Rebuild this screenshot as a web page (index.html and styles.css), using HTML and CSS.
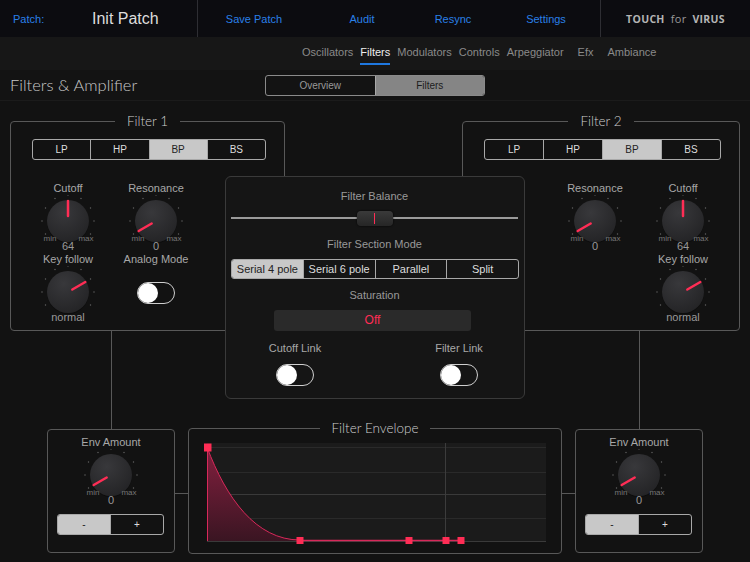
FILE: index.html
```html
<!DOCTYPE html>
<html lang="en">
<head>
    <meta charset="UTF-8">
    <title>Touch for Virus - Filters</title>
    <link rel="stylesheet" href="styles.css">
</head>
<body>
    <!-- TOP BAR -->
    <header class="topbar">
        <div class="patch">
            <span class="patch-label">Patch:</span>
            <span class="patch-name">Init Patch</span>
        </div>
        <nav class="actions">
            <a href="#">Save Patch</a>
            <a href="#">Audit</a>
            <a href="#">Resync</a>
            <a href="#">Settings</a>
        </nav>
        <div class="brand"><b>TOUCH</b> <span>for</span> <b>VIRUS</b></div>
    </header>

    <nav class="tabs">
        <a href="#">Oscillators</a>
        <a href="#" class="active">Filters</a>
        <a href="#">Modulators</a>
        <a href="#">Controls</a>
        <a href="#">Arpeggiator</a>
        <a href="#" class="wide">Efx</a>
        <a href="#" class="wide">Ambiance</a>
    </nav>

    <div class="titlebar">
        <h1>Filters &amp; Amplifier</h1>
        <div class="seg view-seg">
            <span>Overview</span>
            <span class="on">Filters</span>
        </div>
    </div>

    <main class="main">
        <div class="filters">
            <!-- FILTER 1 -->
            <fieldset class="panel filter">
                <legend>Filter 1</legend>
                <div class="seg type-seg">
                    <span>LP</span><span>HP</span><span class="on">BP</span><span>BS</span>
                </div>
                <div class="knobs">
                    <div class="ctl">
                        <div class="ctl-label">Cutoff</div>
                        <div class="knob" data-angle="0"></div>
                        <div class="ctl-value">64</div>
                    </div>
                    <div class="ctl">
                        <div class="ctl-label">Resonance</div>
                        <div class="knob" data-angle="-120"></div>
                        <div class="ctl-value">0</div>
                    </div>
                    <div class="ctl">
                        <div class="ctl-label">Key follow</div>
                        <div class="knob" data-angle="60" data-scale="none"></div>
                        <div class="ctl-value">normal</div>
                    </div>
                    <div class="ctl">
                        <div class="ctl-label">Analog Mode</div>
                        <span class="toggle"></span>
                    </div>
                </div>
            </fieldset>

            <!-- FILTER 2 -->
            <fieldset class="panel filter filter-2">
                <legend>Filter 2</legend>
                <div class="seg type-seg">
                    <span>LP</span><span>HP</span><span class="on">BP</span><span>BS</span>
                </div>
                <div class="knobs">
                    <div class="ctl">
                        <div class="ctl-label">Resonance</div>
                        <div class="knob" data-angle="-120"></div>
                        <div class="ctl-value">0</div>
                    </div>
                    <div class="ctl">
                        <div class="ctl-label">Cutoff</div>
                        <div class="knob" data-angle="0"></div>
                        <div class="ctl-value">64</div>
                    </div>
                    <div class="ctl col-2">
                        <div class="ctl-label">Key follow</div>
                        <div class="knob" data-angle="60" data-scale="none"></div>
                        <div class="ctl-value">normal</div>
                    </div>
                </div>
            </fieldset>
        </div>

        <!-- CENTER SECTION -->
        <section class="center">
            <div class="cp-label">Filter Balance</div>
            <div class="slider"><span class="thumb"></span></div>
            <div class="cp-label">Filter Section Mode</div>
            <div class="seg mode-seg">
                <span class="on">Serial 4 pole</span><span>Serial 6 pole</span><span>Parallel</span><span>Split</span>
            </div>
            <div class="cp-label">Saturation</div>
            <div class="off">Off</div>
            <div class="links">
                <div class="ctl">
                    <div class="ctl-label">Cutoff Link</div>
                    <span class="toggle"></span>
                </div>
                <div class="ctl">
                    <div class="ctl-label">Filter Link</div>
                    <span class="toggle"></span>
                </div>
            </div>
        </section>

        <div class="bottom">
            <div class="panel env env-left">
                <div class="ctl">
                    <div class="ctl-label">Env Amount</div>
                    <div class="knob" data-angle="-120"></div>
                    <div class="ctl-value">0</div>
                </div>
                <div class="seg pm-seg"><span class="on">-</span><span>+</span></div>
            </div>

            <fieldset class="panel envelope">
                <legend>Filter Envelope</legend>
                <svg class="graph" width="350" height="108" viewBox="0 0 350 108">
                    <defs>
                        <linearGradient id="envFill" x1="0" y1="0" x2="0" y2="1">
                            <stop offset="0" stop-color="#84203f"/>
                            <stop offset="1" stop-color="#3a1522"/>
                        </linearGradient>
                    </defs>
                    <rect x="3" y="3" width="339" height="98" fill="#1b1b1b"/>
                    <g stroke="#2a2a2a" stroke-width="1">
                        <line x1="3" y1="7.5" x2="342" y2="7.5"/>
                        <line x1="3" y1="32.5" x2="342" y2="32.5"/>
                        <line x1="3" y1="78.5" x2="342" y2="78.5"/>
                    </g>
                    <line x1="3" y1="54.5" x2="342" y2="54.5" stroke="#3a3a3a"/>
                    <line x1="241.5" y1="3" x2="241.5" y2="101" stroke="#3c3c3c"/>
                    <line x1="3" y1="101.5" x2="342" y2="101.5" stroke="#3a3a3a"/>
                    <path d="M3,7 C22,58 52,100 96,100 L96,101 L3,101 Z" fill="url(#envFill)"/>
                    <path d="M3,7 C22,58 52,100 96,100" fill="none" stroke="#d8285a" stroke-width="1"/>
                    <line x1="3.5" y1="7" x2="3.5" y2="101" stroke="#d8285a"/>
                    <line x1="96" y1="100.5" x2="257" y2="100.5" stroke="#d8285a" stroke-width="1.5"/>
                    <g fill="#ff2d55">
                        <rect x="-0.5" y="3.5" width="8" height="8"/>
                        <rect x="92.5" y="97" width="7" height="7"/>
                        <rect x="201.5" y="97" width="7" height="7"/>
                        <rect x="238.5" y="97" width="7" height="7"/>
                        <rect x="253.5" y="97" width="7" height="7"/>
                    </g>
                </svg>
            </fieldset>

            <div class="panel env env-right">
                <div class="ctl">
                    <div class="ctl-label">Env Amount</div>
                    <div class="knob" data-angle="-120"></div>
                    <div class="ctl-value">0</div>
                </div>
                <div class="seg pm-seg"><span class="on">-</span><span>+</span></div>
            </div>
        </div>
    </main>

    <script src="script.js"></script>
</body>
</html>
```

FILE: styles.css
```css
body {
    margin: 0;
    width: 750px;
    height: 562px;
    overflow: hidden;
    background: #121212;
    color: #aaa;
    font-family: "Liberation Sans", Arial, sans-serif;
}
a {
    text-decoration: none;
    color: inherit;
}

/* top bar */
.topbar {
    display: flex;
    height: 37px;
    background: #0c0c10;
}
.patch {
    width: 198px;
    box-sizing: border-box;
    display: flex;
    align-items: center;
    border-right: 1px solid #2e2e33;
}
.patch-label {
    width: 79px;
    margin-left: 13px;
    font-size: 11px;
    color: #2a80e8;
}
.patch-name {
    font-size: 16px;
    color: #ddd;
}
.actions {
    display: grid;
    grid-template-columns: 112px 104px 78px 108px;
    align-items: center;
    text-align: center;
    font-size: 11px;
    color: #2a80e8;
}
.brand {
    flex: 1;
    display: flex;
    align-items: center;
    justify-content: center;
    gap: 6px;
    border-left: 1px solid #2e2e33;
    font-family: "Open Sans", sans-serif;
    font-size: 10.5px;
    color: #b4b4b4;
    letter-spacing: 0.3px;
}
.brand span {
    color: #999;
    font-size: 11px;
}

/* tabs */
.tabs {
    display: flex;
    gap: 7px;
    height: 33px;
    box-sizing: border-box;
    padding-left: 302px;
    background: #171717;
    font-size: 11px;
    color: #8a8a8a;
}
.tabs a {
    padding: 9px 0 6px;
    line-height: 13px;
    border-bottom: 2px solid transparent;
    height: 28px;
    box-sizing: border-box;
}
.tabs a.active {
    color: #eee;
    border-bottom-color: #1f78e0;
}
.tabs a.wide {
    margin-left: 7px;
}

/* title */
.titlebar {
    display: grid;
    grid-template-columns: 1fr 220px 1fr;
    align-items: center;
    height: 31px;
    box-sizing: border-box;
    background: #131313;
    border-bottom: 1px solid #1b1b1b;
}
.titlebar h1 {
    margin: 0 0 0 10px;
    font-family: Lato, sans-serif;
    font-weight: 300;
    font-size: 16.5px;
    color: #c8c8c8;
}

/* segmented controls */
.seg {
    display: flex;
    border: 1px solid #a8a8a8;
    border-radius: 3px;
    overflow: hidden;
}
.seg span {
    flex: 1;
    text-align: center;
    font-size: 10px;
    line-height: 19px;
    color: #ddd;
}
.seg span + span {
    border-left: 1px solid #a8a8a8;
}
.seg .on {
    background: #c8c8c8;
    color: #222;
}
.view-seg {
    border-color: #8a8a8a;
}
.view-seg span {
    color: #999;
}
.view-seg .on {
    background: #858585;
    color: #1c1c1c;
}

/* panels */
.main {
    position: relative;
    padding: 12px 10px 0;
}
.filters {
    display: flex;
    justify-content: space-between;
}
.panel {
    border: 1px solid #585858;
    border-radius: 4px;
}
fieldset.panel {
    margin: 0;
    padding: 0;
    min-width: 0;
    box-sizing: border-box;
}
legend {
    margin: 0 auto;
    padding: 0 12px;
    font-family: Lato, sans-serif;
    font-weight: 300;
    font-size: 13.5px;
    line-height: 16px;
    color: #cfcfcf;
}
.filter {
    width: 275px;
    height: 218px;
}
.filter-2 {
    width: 278px;
}
.type-seg {
    margin: 10px 18px 0 21px;
}

/* knobs */
.knobs {
    display: grid;
    grid-template-columns: 88px 88px;
    row-gap: 1px;
    margin: 22px 0 0 13px;
}
.filter-2 .knobs {
    margin-left: 88px;
}
.col-2 {
    grid-column: 2;
}
.ctl {
    display: flex;
    flex-direction: column;
    align-items: center;
}
.ctl-label {
    font-size: 11px;
    line-height: 13px;
    color: #a8a8a8;
}
.knob svg {
    display: block;
}
.ctl-value {
    margin-top: -7px;
    font-size: 11px;
    line-height: 12px;
    color: #999;
}

/* toggle */
.toggle {
    position: relative;
    width: 38px;
    height: 22px;
    margin-top: 16px;
    box-sizing: border-box;
    border: 1px solid #cfcfcf;
    border-radius: 11px;
}
.toggle::after {
    content: "";
    position: absolute;
    left: 0;
    top: 0;
    width: 20px;
    height: 20px;
    border-radius: 50%;
    background: #fff;
}

/* center section */
.center {
    position: absolute;
    left: 225px;
    top: 75px;
    width: 300px;
    height: 223px;
    box-sizing: border-box;
    padding: 0 6px 0 5px;
    background: #151515;
    border: 1px solid #3a3a3a;
    border-radius: 6px;
    text-align: center;
}
.cp-label {
    margin-top: 10px;
    font-size: 11px;
    line-height: 13px;
    color: #999;
}
.center .cp-label:first-child {
    margin-top: 13px;
}
.slider {
    position: relative;
    height: 15px;
    margin-top: 8px;
}
.slider::before {
    content: "";
    position: absolute;
    left: 0;
    right: 0;
    top: 6px;
    height: 2px;
    background: #9a9a9a;
}
.thumb {
    position: absolute;
    left: 126px;
    top: 0;
    width: 36px;
    height: 15px;
    box-sizing: border-box;
    border-radius: 4px;
    background: linear-gradient(#3a3a3a, #262626);
    box-shadow: 0 0 2px #000;
}
.thumb::after {
    content: "";
    position: absolute;
    left: 17px;
    top: 2px;
    width: 1px;
    height: 11px;
    background: #ff2d55;
}
.mode-seg {
    width: 288px;
    box-sizing: border-box;
    margin-top: 8px;
}
.mode-seg span {
    font-size: 11px;
    line-height: 18px;
}
.center .cp-label:nth-of-type(3) {
    margin-top: 12px;
}
.off {
    width: 197px;
    margin: 8px 0 0 43px;
    background: #2a2a2a;
    border-radius: 3px;
    font-size: 12px;
    line-height: 21px;
    color: #ff2d55;
}
.links {
    display: grid;
    grid-template-columns: 128px 128px;
    column-gap: 36px;
    margin-top: 11px;
}
.links .toggle {
    margin-top: 9px;
}

/* bottom row */
.bottom {
    display: flex;
    align-items: flex-start;
    margin-top: 89px;
    padding-left: 37px;
}
.env {
    position: relative;
    width: 128px;
    height: 124px;
    box-sizing: border-box;
    margin-top: 9px;
    padding-top: 6px;
}
.env::before {
    content: "";
    position: absolute;
    left: 63px;
    top: -99px;
    width: 1px;
    height: 98px;
    background: #585858;
}
.env::after {
    content: "";
    position: absolute;
    top: 63px;
    width: 13px;
    height: 1px;
    background: #585858;
}
.env-left::after {
    right: -14px;
}
.env-right::after {
    left: -14px;
}
.pm-seg {
    width: 107px;
    box-sizing: border-box;
    margin: 8px 0 0 9px;
}
fieldset.envelope {
    width: 374px;
    height: 134px;
    margin: 0 13px;
}
.graph {
    display: block;
    margin: 4px 0 0 15px;
}
```

FILE: script.js
```js
// Draw the rotary knobs from their data-angle
const PINK = "#ff2d55";

function polar(r, deg) {
    const a = deg * Math.PI / 180;
    return [33 + r * Math.sin(a), 26 - r * Math.cos(a)];
}

document.querySelectorAll(".knob").forEach((el, i) => {
    const angle = +el.dataset.angle;
    let ticks = "";
    for (let d = -120; d <= 120; d += 30) {
        const [x, y] = polar(26, d);
        ticks += `<rect x="${(x - 0.6).toFixed(1)}" y="${(y - 0.6).toFixed(1)}" width="1.2" height="1.2" fill="#666"/>`;
    }
    const [x1, y1] = polar(5, angle);
    const [x2, y2] = polar(20, angle);
    const scale = el.dataset.scale === "none" ? "" :
        `<text x="15" y="46" font-size="8" fill="#777" text-anchor="middle">min</text>
         <text x="51" y="46" font-size="8" fill="#777" text-anchor="middle">max</text>`;
    el.innerHTML = `
        <svg width="66" height="52" viewBox="0 0 66 52">
            <defs>
                <radialGradient id="kg${i}" cx="0.4" cy="0.3" r="0.8">
                    <stop offset="0" stop-color="#38383b"/>
                    <stop offset="1" stop-color="#222224"/>
                </radialGradient>
            </defs>
            ${ticks}
            <circle cx="33" cy="27" r="21" fill="#0a0a0a" opacity="0.6"/>
            <circle cx="33" cy="26" r="21" fill="url(#kg${i})"/>
            ${scale}
            <line x1="${x1}" y1="${y1}" x2="${x2}" y2="${y2}" stroke="${PINK}" stroke-width="2.5" stroke-linecap="round"/>
        </svg>`;
});
```
